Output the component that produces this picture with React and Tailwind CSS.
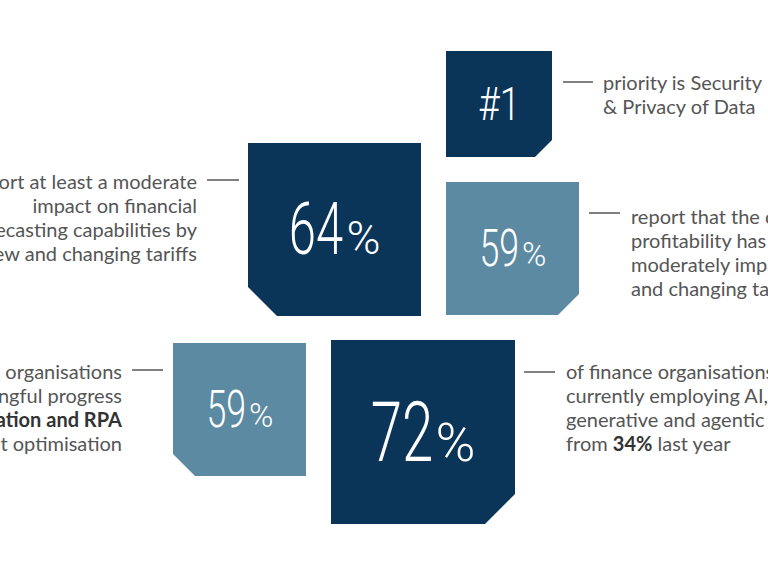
import React from "react";

const NAVY = "bg-[#0b3558]";
const STEEL = "bg-[#5d8aa3]";

function Rule({ className = "" }) {
    return <div className={`h-[2px] shrink-0 bg-[#808080] ${className}`} />;
}

// text that hangs off the left edge of the page, right aligned to its column
function LeftText({ width, children }) {
    return (
        <div className={`flex shrink-0 justify-end ${width}`}>
            <p className="shrink-0 whitespace-nowrap text-right">{children}</p>
        </div>
    );
}

function RightText({ className = "", children }) {
    return <p className={`shrink-0 whitespace-nowrap ${className}`}>{children}</p>;
}

function Num({ digits, digitClass, pctClass }) {
    return (
        <div className="flex items-baseline text-white font-['Roboto',sans-serif] font-light">
            <span className={`inline-block leading-none ${digitClass}`}>{digits}</span>
            {pctClass && <span className={`leading-none ${pctClass}`}>%</span>}
        </div>
    );
}

export default function App() {
    return (
        <div className="relative h-[576px] w-[768px] overflow-hidden bg-white font-['Lato',sans-serif] text-[20px] leading-[24px] text-[#555]">
            {/* #1 */}
            <div className="flex items-start pl-[446px] pt-[51px]">
                <div className={`flex h-[106px] w-[106px] shrink-0 items-center justify-center ${NAVY} [clip-path:polygon(0_0,100%_0,100%_calc(100%_-_17px),calc(100%_-_17px)_100%,0_100%)]`}>
                    <Num digits="#1" digitClass="text-[46px] scale-x-[0.8] -mx-[5px]" />
                </div>
                <div className="ml-[11px] mt-[19px] flex items-start">
                    <Rule className="mt-[11px] w-[30px]" />
                    <RightText className="ml-[10px]">
                        priority is Security
                        <br />& Privacy of Data
                    </RightText>
                </div>
            </div>

            {/* 64% + 59% */}
            <div className="-mt-[14px] flex items-start">
                <div className="flex shrink-0 items-start">
                    <div className="mt-[26px] flex items-start">
                        <LeftText width="w-[197px]">
                            report at least a moderate
                            <br />impact on financial
                            <br />forecasting capabilities by
                            <br />new and changing tariffs
                        </LeftText>
                        <Rule className="ml-[10px] mt-[10px] w-[32px]" />
                    </div>
                    <div className={`ml-[9px] flex h-[173px] w-[173px] shrink-0 items-center justify-center ${NAVY} [clip-path:polygon(0_0,100%_0,100%_100%,29px_100%,0_calc(100%_-_29px))]`}>
                        <Num digits="64" digitClass="text-[72px] scale-x-[0.68] -mx-[13px]" pctClass="ml-[4px] text-[46px]" />
                    </div>
                </div>
                <div className="ml-[25px] mt-[39px] flex shrink-0 items-start">
                    <div className={`flex h-[133px] w-[133px] shrink-0 items-center justify-center ${STEEL} [clip-path:polygon(0_0,100%_0,100%_calc(100%_-_21px),calc(100%_-_21px)_100%,0_100%)]`}>
                        <Num digits="59" digitClass="text-[51px] scale-x-[0.7] -mx-[8px]" pctClass="ml-[3px] text-[33px]" />
                    </div>
                    <div className="ml-[10px] mt-[22px] flex items-start">
                        <Rule className="mt-[8px] w-[31px]" />
                        <RightText className="ml-[11px]">
                            report that the company's
                            <br />profitability has been
                            <br />moderately impacted by new
                            <br />and changing tariffs
                        </RightText>
                    </div>
                </div>
            </div>

            {/* 59% + 72% */}
            <div className="mt-[24px] flex items-start">
                <div className="flex shrink-0 items-start">
                    <div className="mt-[19px] flex items-start">
                        <LeftText width="w-[122px]">
                            of finance organisations
                            <br />are making meaningful progress
                            <br />in <span className="font-bold text-[#333]">automation and RPA</span>
                            <br />for cost optimisation
                        </LeftText>
                        <Rule className="ml-[10px] mt-[10px] w-[31px]" />
                    </div>
                    <div className={`ml-[10px] mt-[3px] flex h-[133px] w-[133px] shrink-0 items-center justify-center ${STEEL} [clip-path:polygon(0_0,100%_0,100%_100%,22px_100%,0_calc(100%_-_22px))]`}>
                        <Num digits="59" digitClass="text-[51px] scale-x-[0.7] -mx-[8px]" pctClass="ml-[3px] text-[33px]" />
                    </div>
                </div>
                <div className="ml-[25px] flex shrink-0 items-start">
                    <div className={`flex h-[184px] w-[184px] shrink-0 items-center justify-center ${NAVY} [clip-path:polygon(0_0,100%_0,100%_calc(100%_-_30px),calc(100%_-_30px)_100%,0_100%)]`}>
                        <Num digits="72" digitClass="text-[83px] scale-x-[0.68] -mx-[15px]" pctClass="ml-[3px] text-[54px]" />
                    </div>
                    <div className="ml-[9px] mt-[19px] flex items-start">
                        <Rule className="mt-[12px] w-[31px]" />
                        <RightText className="ml-[11px]">
                            of finance organisations are
                            <br />currently employing AI, including
                            <br />generative and agentic AI, up
                            <br />from <span className="font-bold text-[#333]">34%</span> last year
                        </RightText>
                    </div>
                </div>
            </div>
        </div>
    );
}
